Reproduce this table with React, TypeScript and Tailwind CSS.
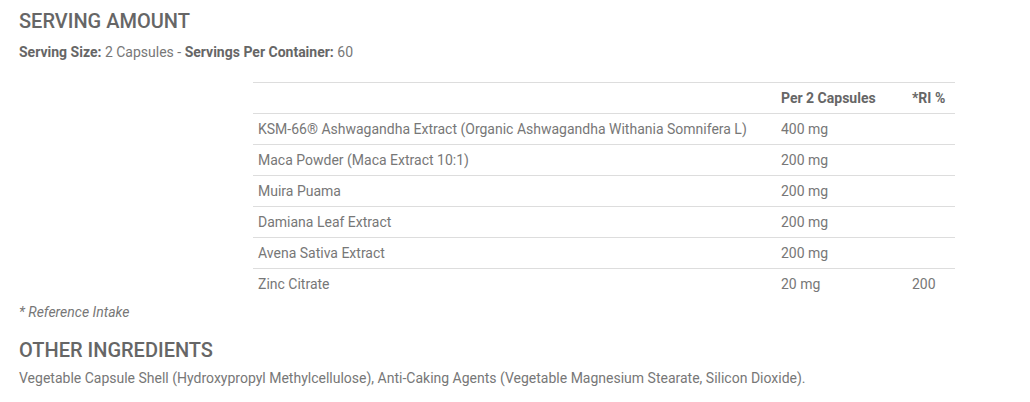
import React from "react";

const rows: [string, string, string][] = [
  ["KSM-66® Ashwagandha Extract (Organic Ashwagandha Withania Somnifera L)", "400 mg", ""],
  ["Maca Powder (Maca Extract 10:1)", "200 mg", ""],
  ["Muira Puama", "200 mg", ""],
  ["Damiana Leaf Extract", "200 mg", ""],
  ["Avena Sativa Extract", "200 mg", ""],
  ["Zinc Citrate", "20 mg", "200"],
];

export default function App() {
  return (
    <div
      className="w-[1030px] h-[402px] bg-white text-[#777] px-[19px] pt-[8px]"
      style={{ fontFamily: "Roboto, 'Liberation Sans', sans-serif" }}
    >
      <h2 className="text-[20px] leading-[26px] font-medium text-[#666] uppercase">Serving Amount</h2>
      <p className="text-[14px] leading-[20px] mt-[8px]">
        <span className="font-bold text-[#666]">Serving Size:</span> 2 Capsules -{" "}
        <span className="font-bold text-[#666]">Servings Per Container:</span> 60
      </p>
      <div className="flex mt-[20px]">
        <table className="ml-[234px] w-[702px] border-collapse text-[14px] leading-[20px]">
          <colgroup>
            <col className="w-[523px]" />
            <col className="w-[131px]" />
            <col className="w-[48px]" />
          </colgroup>
          <thead>
            <tr className="border-t border-[#ddd]">
              <th className="h-[31px] px-[5px] text-left font-medium"></th>
              <th className="h-[31px] px-[5px] text-left font-bold text-[#666]">Per 2 Capsules</th>
              <th className="h-[31px] px-[5px] text-left font-bold text-[#666]">*RI %</th>
            </tr>
          </thead>
          <tbody>
            {rows.map((r) => (
              <tr key={r[0]} className="border-t border-[#ddd]">
                <td className="h-[31px] px-[5px] py-0 align-middle">{r[0]}</td>
                <td className="h-[31px] px-[5px] py-0 align-middle">{r[1]}</td>
                <td className="h-[31px] px-[5px] py-0 align-middle">{r[2]}</td>
              </tr>
            ))}
          </tbody>
        </table>
      </div>
      <p className="text-[14px] leading-[20px] italic mt-[2px]">* Reference Intake</p>
      <h2 className="text-[20px] leading-[26px] font-medium text-[#666] uppercase mt-[15px]">Other Ingredients</h2>
      <p className="text-[14px] leading-[20px] mt-[5px]">
        Vegetable Capsule Shell (Hydroxypropyl Methylcellulose), Anti-Caking Agents (Vegetable Magnesium Stearate, Silicon Dioxide).
      </p>
    </div>
  );
}
